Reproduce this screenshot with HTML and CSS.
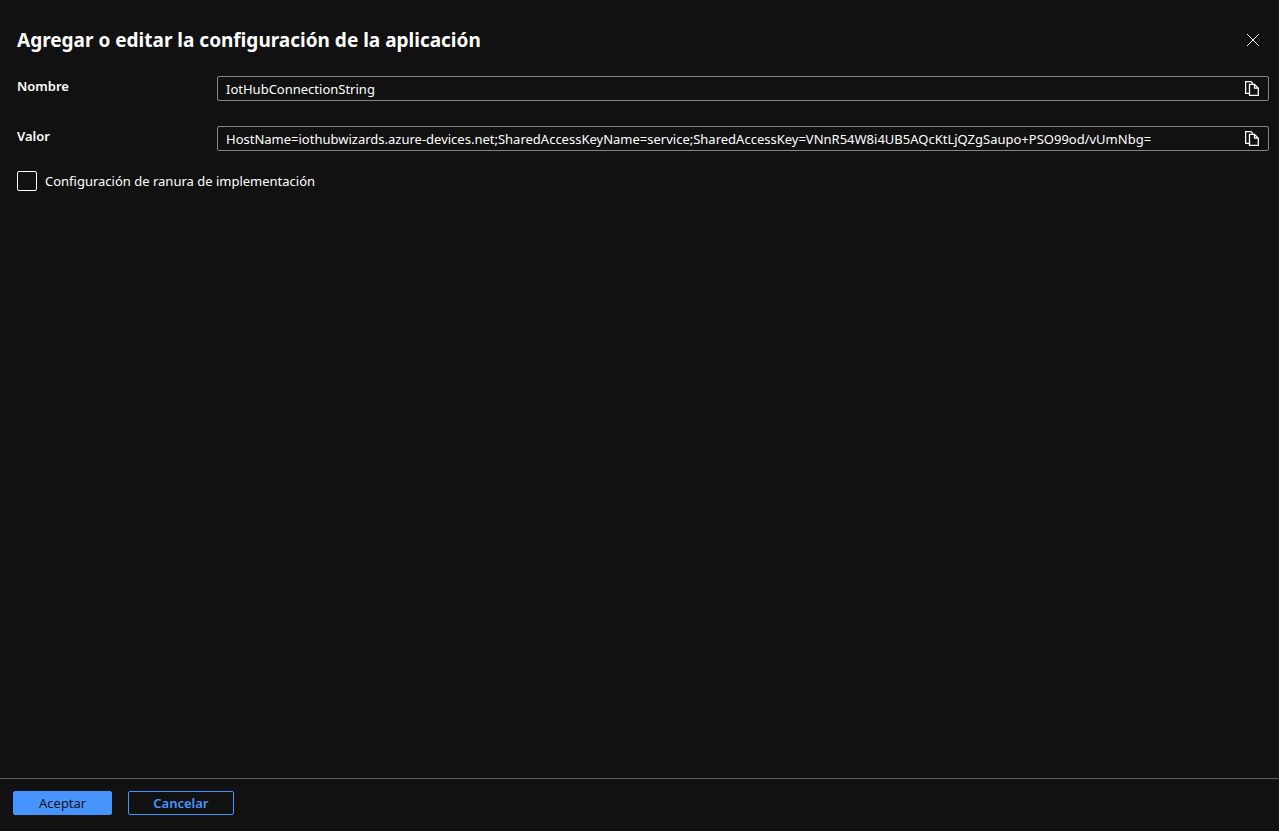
FILE: index.html
```html
<!DOCTYPE html>
<html lang="es">
<head>
<meta charset="utf-8">
<meta name="viewport" content="width=device-width, initial-scale=1">
<title>Agregar o editar la configuración de la aplicación</title>
<link rel="stylesheet" href="styles.css">
</head>
<body>
<form class="panel">
  <header class="panel-header">
    <h1 class="panel-title">Agregar o editar la configuración de la aplicación</h1>
    <button class="icon-button" type="button" aria-label="Cerrar">
      <svg width="12" height="12" viewBox="0 0 12 12" fill="none" stroke="currentColor" aria-hidden="true"><path d="M0 0l12 12M12 0l-12 12"/></svg>
    </button>
  </header>
  <main class="panel-body">
    <div class="field">
      <label class="field-label" for="name">Nombre</label>
      <div class="field-box">
        <input class="field-input" id="name" type="text" value="IotHubConnectionString" spellcheck="false">
        <button class="icon-button" type="button" aria-label="Copiar nombre">
          <svg width="14" height="15" viewBox="0 0 14 15" fill="none" stroke="currentColor" stroke-width="1.3" aria-hidden="true"><path d="M4 12.4H0.6V0.6H6L8 2.6M4.5 3.4H9.5L13.3 7.2V14.4H4.5ZM9.5 3.4V7.2H13.3"/></svg>
        </button>
      </div>
    </div>
    <div class="field">
      <label class="field-label" for="value">Valor</label>
      <div class="field-box">
        <input class="field-input" id="value" type="text" value="HostName=iothubwizards.azure-devices.net;SharedAccessKeyName=service;SharedAccessKey=VNnR54W8i4UB5AQcKtLjQZgSaupo+PSO99od/vUmNbg=" spellcheck="false">
        <button class="icon-button" type="button" aria-label="Copiar valor">
          <svg width="14" height="15" viewBox="0 0 14 15" fill="none" stroke="currentColor" stroke-width="1.3" aria-hidden="true"><path d="M4 12.4H0.6V0.6H6L8 2.6M4.5 3.4H9.5L13.3 7.2V14.4H4.5ZM9.5 3.4V7.2H13.3"/></svg>
        </button>
      </div>
    </div>
    <div class="check-row">
      <input class="check" id="slot" type="checkbox">
      <label for="slot">Configuración de ranura de implementación</label>
    </div>
  </main>
  <footer class="panel-footer">
    <button class="button button-primary" type="button">Aceptar</button>
    <button class="button button-secondary" type="button">Cancelar</button>
  </footer>
</form>
</body>
</html>
```
FILE: styles.css
```css
* {
  box-sizing: border-box;
}

body {
  margin: 0;
  background: #111;
  color: #fff;
  font: 13px/20px "Noto Sans", "Open Sans", sans-serif;
}

.panel {
  display: flex;
  flex-direction: column;
  min-height: 100vh;
}

.panel-header {
  display: flex;
  align-items: center;
  justify-content: space-between;
  padding: 26px 20px 0 17px;
}

.panel-title {
  margin: 0;
  font-size: 19px;
  line-height: 28px;
  font-weight: 700;
}

.icon-button {
  display: flex;
  padding: 0;
  border: 0;
  background: none;
  color: inherit;
}

.panel-body {
  flex: 1;
  padding: 22px 10px 0 17px;
}

.field {
  display: grid;
  grid-template-columns: 200px 1fr;
  margin-bottom: 25px;
}

.field-label {
  font-weight: 600;
}

.field-box {
  display: flex;
  align-items: center;
  height: 25px;
  padding: 0 9px 0 8px;
  border: 1px solid #858585;
  border-radius: 2px;
}

.field-input {
  flex: 1;
  min-width: 0;
  padding: 0;
  border: 0;
  outline: 0;
  background: none;
  color: inherit;
  font: inherit;
}

.check-row {
  display: flex;
  align-items: center;
  gap: 8px;
  margin-top: -5px;
}

.check {
  appearance: none;
  width: 20px;
  height: 20px;
  margin: 0;
  border: 1px solid #fff;
  border-radius: 2px;
}

.check:checked {
  background: #4894fe;
}

.panel-footer {
  display: flex;
  gap: 16px;
  padding: 12px 13px 16px;
  border-top: 1px solid #606060;
}

.button {
  height: 24px;
  padding: 0 24px;
  border: 1px solid #4894fe;
  border-radius: 2px;
  font: inherit;
}

.button-primary {
  padding: 0 25px;
  background: #4894fe;
  color: #111;
}

.button-secondary {
  background: none;
  color: #4894fe;
  font-weight: 600;
}
```
